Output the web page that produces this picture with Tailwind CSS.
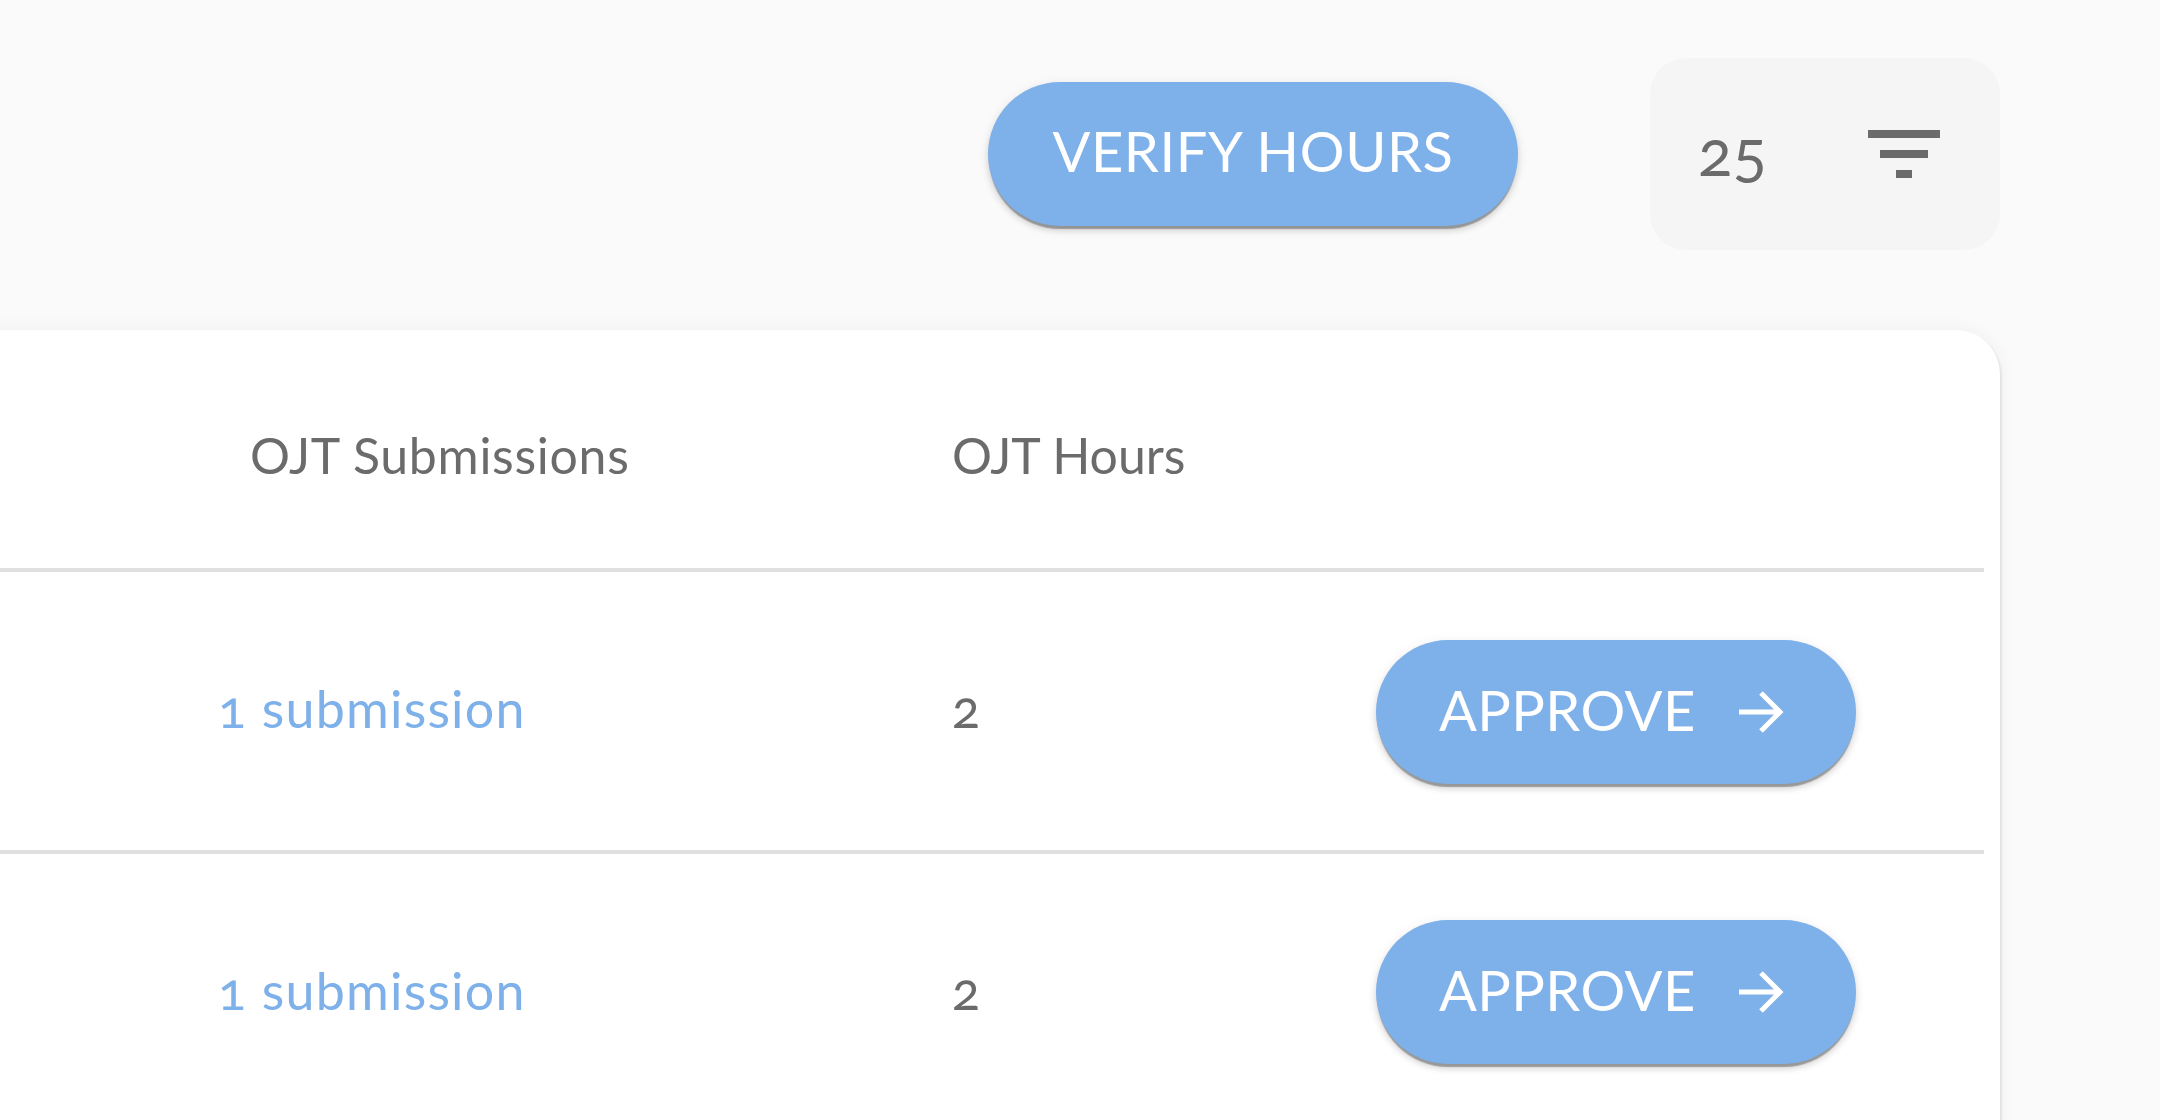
<!DOCTYPE html>
<html lang="en">
<head>
    <meta charset="UTF-8">
    <title>OJT Hours</title>
    <script src="https://cdn.jsdelivr.net/npm/@tailwindcss/browser@4"></script>
</head>
<body class="bg-[#fafafa] font-['Lato',sans-serif] text-[#6b6b6b]">
    <div class="w-[2160px] h-[1120px] overflow-hidden">
        <!-- toolbar -->
        <div class="flex justify-end items-start h-[330px] pt-[58px] pr-[160px]">
            <button class="mt-[24px] w-[530px] h-[144px] rounded-full bg-[#7eb0e9] text-white text-[56px] tracking-[0.6px] shadow-[0_4px_1px_-1px_rgba(0,0,0,0.3),0_5px_6px_0_rgba(0,0,0,0.12),0_2px_12px_0_rgba(0,0,0,0.08)] pb-[6px]">VERIFY HOURS</button>
            <div class="ml-[132px] w-[350px] h-[192px] rounded-[36px] bg-[#f5f5f5] flex pl-[48px]">
                <span class="mt-[56px] text-[64px] leading-[76px] oldstyle-nums">25</span>
                <svg class="ml-[101px] mt-[72px] w-[72px] h-[48px]" viewBox="0 0 72 48" fill="#6b6b6b">
                    <rect x="0" y="0" width="72" height="8"></rect>
                    <rect x="12" y="20" width="48" height="8"></rect>
                    <rect x="28" y="40" width="16" height="8"></rect>
                </svg>
            </div>
        </div>
        <!-- table card -->
        <div class="ml-[-60px] w-[2060px] h-[900px] bg-white rounded-tr-[44px] pr-[16px] shadow-[0_3px_2px_2px_rgba(0,0,0,0.08),0_0_16px_4px_rgba(0,0,0,0.03)]">
            <div class="flex items-center h-[238px] border-b-4 border-[#e0e0e0] box-content text-[50px]">
                <div class="w-[1012px] pl-[310px] pt-[12px] tracking-[0.7px]">OJT Submissions</div>
                <div class="pt-[12px]">OJT Hours</div>
            </div>
            <div class="flex items-center h-[278px] border-b-4 border-[#e0e0e0] box-content text-[52px]">
                <a class="w-[1012px] pl-[278px] pb-[6px] text-[#7eb0e9] tracking-[1.2px] oldstyle-nums">1 submission</a>
                <div class="w-[424px] pb-[6px] oldstyle-nums">2</div>
                <button class="mt-[2px] w-[480px] h-[144px] rounded-full bg-[#7eb0e9] text-white text-[56px] flex items-center pl-[63px] pb-[4px] shadow-[0_4px_1px_-1px_rgba(0,0,0,0.3),0_5px_6px_0_rgba(0,0,0,0.12),0_2px_12px_0_rgba(0,0,0,0.08)]">
                    <span class="tracking-[0.4px]">APPROVE</span>
                    <svg class="ml-[40px] mt-[4px] w-[48px] h-[48px]" viewBox="0 0 48 48" fill="none" stroke="white" stroke-width="5">
                        <path d="M3 24H44M25 5L44 24L25 43"></path>
                    </svg>
                </button>
            </div>
            <div class="flex items-center h-[278px] border-b-4 border-[#e0e0e0] box-content text-[52px]">
                <a class="w-[1012px] pl-[278px] pb-[6px] text-[#7eb0e9] tracking-[1.2px] oldstyle-nums">1 submission</a>
                <div class="w-[424px] pb-[6px] oldstyle-nums">2</div>
                <button class="mb-[2px] w-[480px] h-[144px] rounded-full bg-[#7eb0e9] text-white text-[56px] flex items-center pl-[63px] pb-[4px] shadow-[0_4px_1px_-1px_rgba(0,0,0,0.3),0_5px_6px_0_rgba(0,0,0,0.12),0_2px_12px_0_rgba(0,0,0,0.08)]">
                    <span class="tracking-[0.4px]">APPROVE</span>
                    <svg class="ml-[40px] mt-[4px] w-[48px] h-[48px]" viewBox="0 0 48 48" fill="none" stroke="white" stroke-width="5">
                        <path d="M3 24H44M25 5L44 24L25 43"></path>
                    </svg>
                </button>
            </div>
        </div>
    </div>
</body>
</html>
